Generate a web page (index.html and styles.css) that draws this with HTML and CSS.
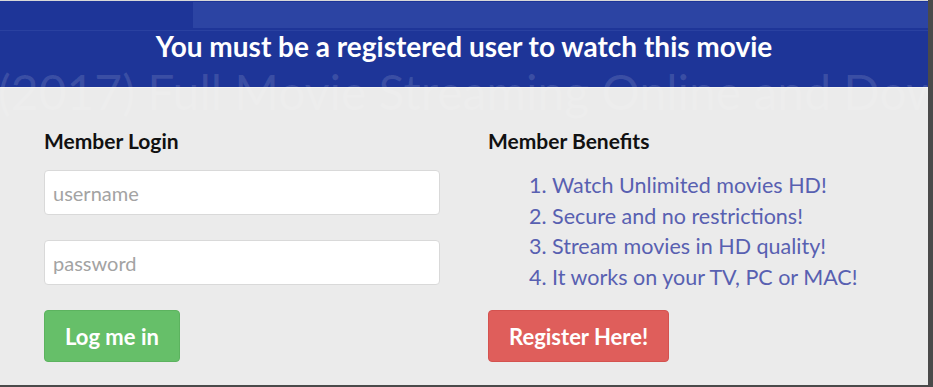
FILE: index.html
```html
<!DOCTYPE html>
<html lang="en">
<head>
    <meta charset="UTF-8">
    <meta name="viewport" content="width=device-width, initial-scale=1.0">
    <title>Members only</title>
    <link rel="stylesheet" href="styles.css">
</head>
<body>
    <div class="modal">
        <div class="watermark">(2017) Full Movie Streaming Online and Down</div>

        <div class="modal-header">
            <div class="ghost-bar">
                <div class="ghost-left"></div>
                <div class="ghost-right"></div>
            </div>
            <h2>You must be a registered user to watch this movie</h2>
        </div>

        <div class="modal-body">
            <div class="col">
                <h3>Member Login</h3>
                <input type="text" class="field" placeholder="username">
                <input type="password" class="field" placeholder="password">
                <button class="btn btn-login">Log me in</button>
            </div>

            <div class="col">
                <h3>Member Benefits</h3>
                <ol class="benefits">
                    <li>Watch Unlimited movies HD!</li>
                    <li>Secure and no restrictions!</li>
                    <li>Stream movies in HD quality!</li>
                    <li>It works on your TV, PC or MAC!</li>
                </ol>
                <button class="btn btn-register">Register Here!</button>
            </div>
        </div>
    </div>
</body>
</html>
```

FILE: styles.css
```css
body {
    margin: 0;
    background-color: #4a4a4a;
    font-family: Lato, "Open Sans", sans-serif;
}
.modal {
    position: relative;
    width: 928px;
    height: 385px;
    background-color: #ebebeb;
    overflow: hidden;
}
.modal-header {
    height: 88px;
    background-color: #1e3598;
    border-bottom: 1px solid #f4f4f4;
    border-top: 1px solid #d8d8d8;
    box-sizing: border-box;
}
.ghost-bar {
    display: flex;
    height: 29px;
    border-bottom: 1px solid #2a41a0;
}
.ghost-left {
    width: 193px;
}
.ghost-right {
    flex: 1;
    height: 26px;
    margin-top: 1px;
    background-color: #2c44a3;
}
.modal-header h2 {
    position: relative;
    z-index: 1;
    margin: 0;
    color: #fff;
    font-size: 28px;
    line-height: 30px;
    text-align: center;
    font-weight: bold;
}
.watermark {
    position: absolute;
    top: 64px;
    left: -2px;
    white-space: nowrap;
    font-size: 48px;
    line-height: 56px;
    color: rgba(255, 255, 255, 0.13);
    z-index: 2;
    pointer-events: none;
}
.modal-body {
    display: flex;
    gap: 48px;
    padding: 41px 44px 0;
}
.col {
    flex: 1;
    display: flex;
    flex-direction: column;
    align-items: flex-start;
}
h3 {
    margin: 0 0 17px;
    font-size: 21px;
    line-height: 24px;
    color: #111;
}
.field {
    width: 100%;
    height: 45px;
    margin-bottom: 25px;
    padding: 0 8px;
    border: 1px solid #d9d9d9;
    border-radius: 4px;
    box-sizing: border-box;
    font-family: inherit;
    font-size: 20px;
    background-color: #fff;
}
.field::placeholder {
    color: #a3a3a3;
}
.benefits {
    margin: 0 0 18px;
    padding-left: 41px;
    list-style-position: inside;
    color: #5860b1;
    font-size: 21.5px;
    line-height: 30.5px;
}
.btn {
    height: 52px;
    padding: 0 20px;
    border: 1px solid transparent;
    border-radius: 4px;
    color: #fff;
    font-family: inherit;
    font-size: 22px;
    font-weight: bold;
    cursor: pointer;
}
.btn-login {
    background-color: #66bf69;
    border-color: #5cb35f;
}
.btn-register {
    background-color: #df5e5b;
    border-color: #d4524f;
}
```
